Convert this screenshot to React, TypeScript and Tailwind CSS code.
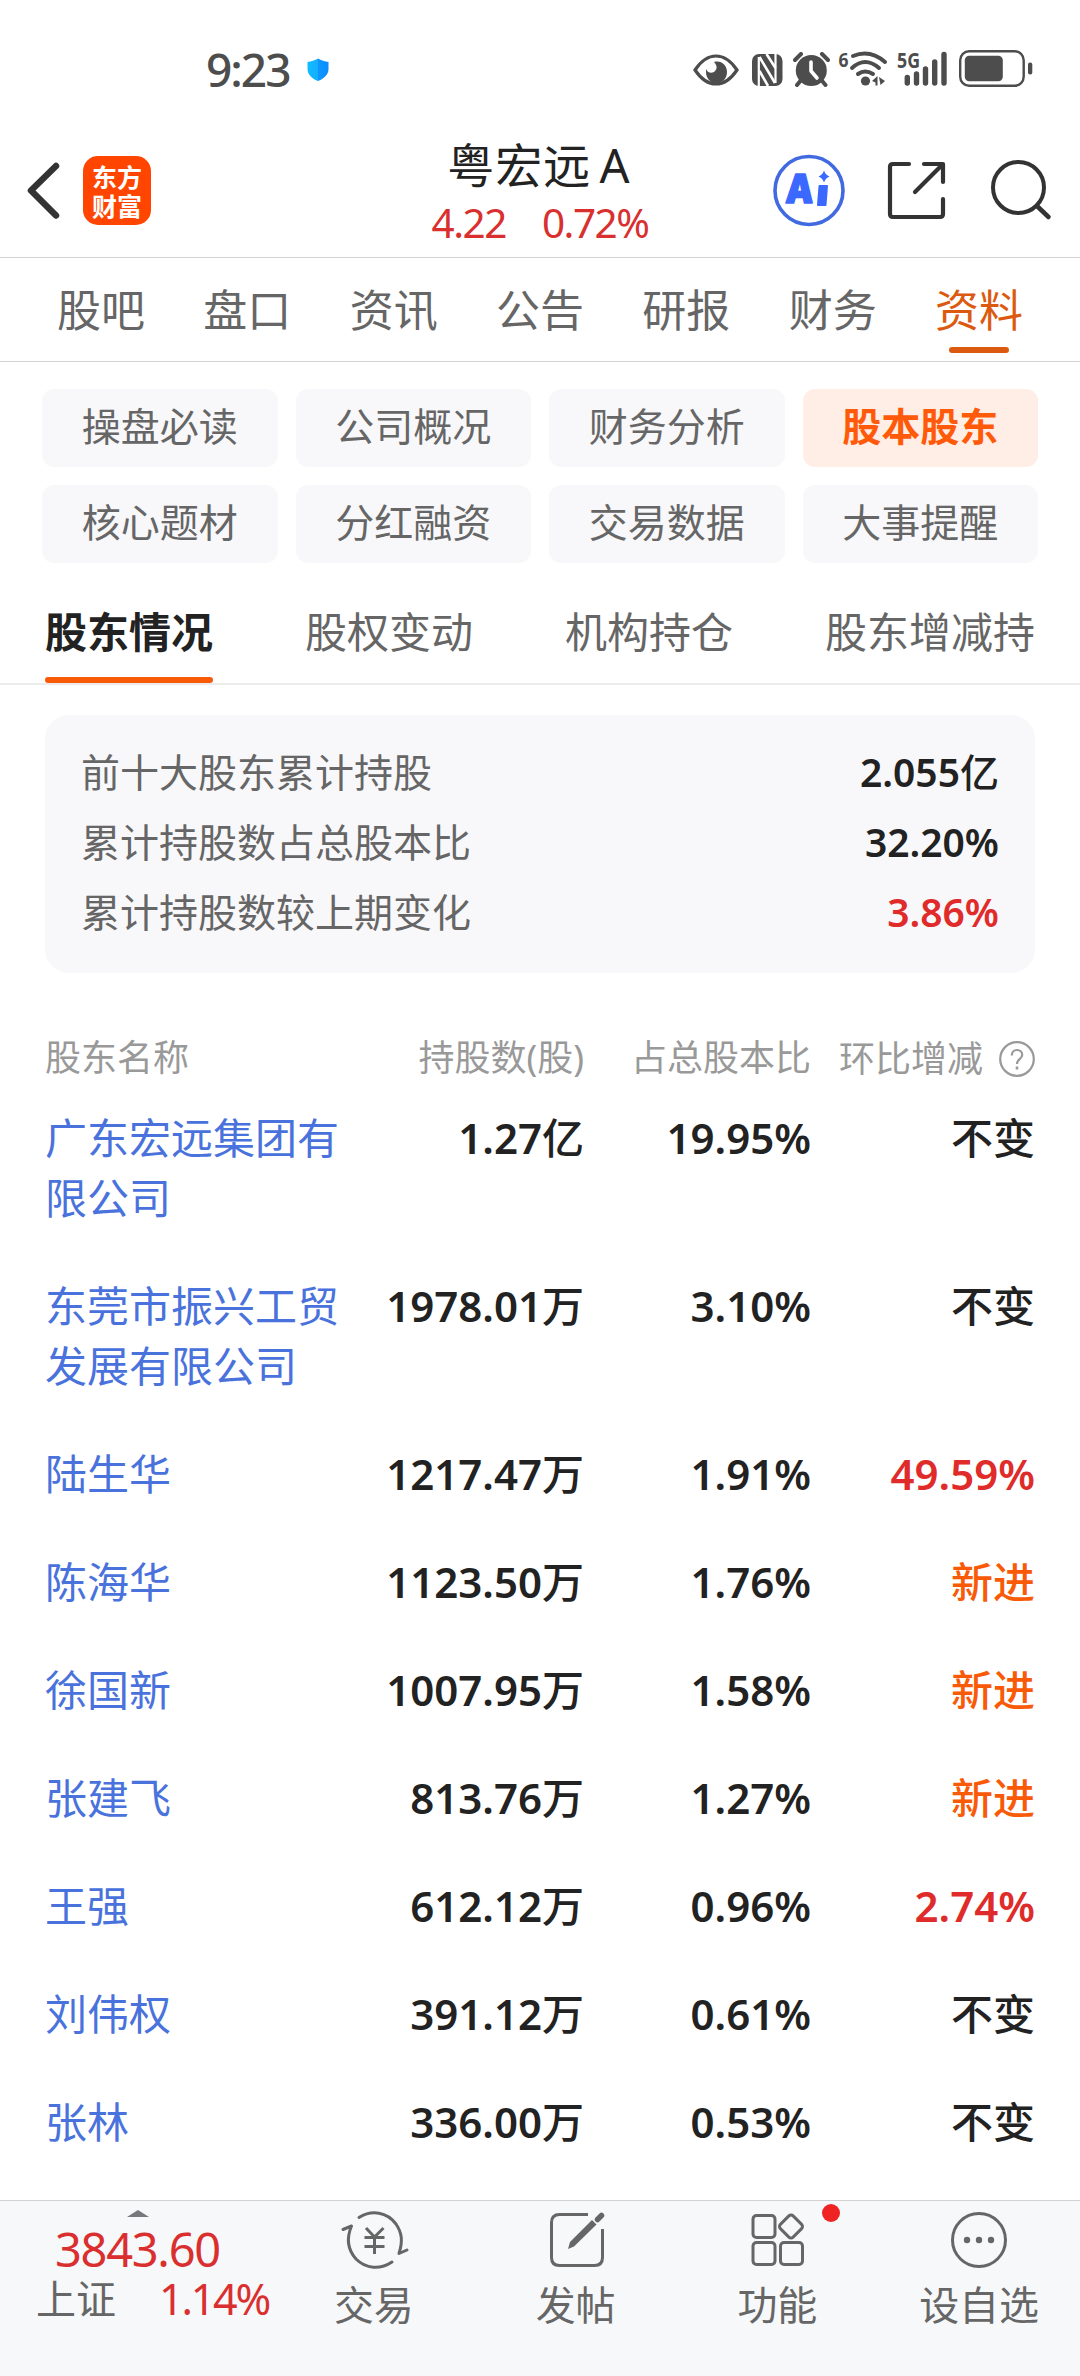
import type { ReactNode } from 'react';

const STATUS = '#4d4d4d';
const INK = '#333333';
const GREY = '#666666';

const mainTabs = ['股吧', '盘口', '资讯', '公告', '研报', '财务', '资料'];
const sections = ['操盘必读', '公司概况', '财务分析', '股本股东', '核心题材', '分红融资', '交易数据', '大事提醒'];
const subTabs = ['股东情况', '股权变动', '机构持仓', '股东增减持'];

const summary = [
  { label: '前十大股东累计持股', value: '2.055亿', tone: 'text-[#222]' },
  { label: '累计持股数占总股本比', value: '32.20%', tone: 'text-[#222]' },
  { label: '累计持股数较上期变化', value: '3.86%', tone: 'text-[#e02b2b]' },
];

const BLACK = 'text-[#222]';
const RED = 'text-[#e02b2b]';
const ORANGE = 'text-[#f95a08]';

const holders = [
  { name: '广东宏远集团有限公司', shares: '1.27亿', ratio: '19.95%', change: '不变', tone: BLACK },
  { name: '东莞市振兴工贸发展有限公司', shares: '1978.01万', ratio: '3.10%', change: '不变', tone: BLACK },
  { name: '陆生华', shares: '1217.47万', ratio: '1.91%', change: '49.59%', tone: RED },
  { name: '陈海华', shares: '1123.50万', ratio: '1.76%', change: '新进', tone: ORANGE },
  { name: '徐国新', shares: '1007.95万', ratio: '1.58%', change: '新进', tone: ORANGE },
  { name: '张建飞', shares: '813.76万', ratio: '1.27%', change: '新进', tone: ORANGE },
  { name: '王强', shares: '612.12万', ratio: '0.96%', change: '2.74%', tone: RED },
  { name: '刘伟权', shares: '391.12万', ratio: '0.61%', change: '不变', tone: BLACK },
  { name: '张林', shares: '336.00万', ratio: '0.53%', change: '不变', tone: BLACK },
];

/** Figures are semibold, the Chinese unit or word after them is medium. */
function Figure({ value }: { value: string }) {
  const digits = value.replace(/[^\d.%]/g, '');
  const unit = value.slice(digits.length);
  return (
    <>
      {digits && <span className="font-semibold">{digits}</span>}
      {unit && <span className="font-medium">{unit}</span>}
    </>
  );
}

function StatusBar() {
  return (
    <div className="flex h-[114px] items-start pt-[48px]">
      <div className="ml-[206px] mt-[-2px] w-[84px] text-[46px] leading-[46px] font-medium tracking-[-2px] text-[#4d4d4d]">9:23</div>
      <svg className="ml-[16px] mt-[9px]" width="24" height="25" viewBox="0 0 24 25">
        <defs>
          <linearGradient id="shield" x1="0" x2="1">
            <stop offset="0" stopColor="#12bcff" />
            <stop offset="0.5" stopColor="#12aeff" />
            <stop offset="0.52" stopColor="#0d97ff" />
            <stop offset="1" stopColor="#0d8cff" />
          </linearGradient>
        </defs>
        <path d="M12 1.5C15 3.5 19 4.5 22.5 5V12C22.5 18 17 22 12 24C7 22 1.500 18 1.500 12V5C5 4.500 9 3.500 12 1.500Z" fill="url(#shield)" />
      </svg>
      <svg className="ml-[363px] mt-[6px]" width="46" height="32" viewBox="693 54 46 32">
        <path d="M695 70C701 61 708 56 716 56S731 61 737 70C731 79 724 84 716 84S701 79 695 70Z" fill="none" stroke={STATUS} strokeWidth="3.2" />
        <path d="M714 62C721 60 727 65 727 72C727 79 722 83 716 83S706 78 706 72V69C708 73 711 73.500 714 72C718 69 717 65 714 62Z" fill={STATUS} />
      </svg>
      <svg className="ml-[12.500px] mt-[6px]" width="31" height="32" viewBox="0 0 31 32">
        <rect width="30.500" height="32" rx="7" fill={STATUS} />
        <path d="M6.800 3V32" stroke="white" strokeWidth="2.200" />
        <path d="M23.500 0V29" stroke="white" strokeWidth="2.200" />
        <path d="M7.500 3L23 29M7.500 17L16 32M14.500 0L23.500 14" stroke="white" strokeWidth="2.600" />
      </svg>
      <svg className="ml-[10.500px] mt-[4px]" width="37" height="35" viewBox="794 52 37 35">
        <path d="M796 60L802 54M829 60L823 54M798 85L803 79M826.500 85L821.500 79" stroke={STATUS} strokeWidth="4" strokeLinecap="round" />
        <circle cx="812.300" cy="70.500" r="15.500" fill={STATUS} />
        <path d="M812 62V71L818 78" stroke="white" strokeWidth="3.600" fill="none" strokeLinecap="round" strokeLinejoin="round" />
      </svg>
      <svg className="ml-[9px] mt-[2px] overflow-visible" width="49" height="37" viewBox="840 50 49 37">
        <text x="839.500" y="66.500" fontSize="20" fontWeight="700" fill={STATUS} textLength="10" lengthAdjust="spacingAndGlyphs">6</text>
        <g fill="none" stroke={STATUS} strokeWidth="4" strokeLinecap="round">
          <path d="M854 56Q871 49 886 62" />
          <path d="M853 68Q866 56 880 68" />
          <path d="M859 74Q866 69 874 74" />
        </g>
        <circle cx="866.500" cy="81" r="4.600" fill={STATUS} />
        <path d="M873 81L878.500 76V85.500H876.500V82.500ZM880 77L886 81L881.500 85Z" fill={STATUS} />
      </svg>
      <svg className="ml-[8px] mt-[2px] overflow-visible" width="52" height="37" viewBox="897 50 52 37">
        <text x="898" y="68" fontSize="22" fontWeight="700" fill={STATUS} textLength="23" lengthAdjust="spacingAndGlyphs">5G</text>
        <g stroke={STATUS} strokeWidth="5.400" strokeLinecap="round">
          <path d="M908.300 77.500V83M917.500 74V83M926.500 69V83M935.700 62V83M945 54.500V83" />
        </g>
      </svg>
      <svg className="ml-[11px] mt-[2px]" width="74" height="38" viewBox="960 50 74 38">
        <rect x="961.200" y="51.200" width="63.500" height="34.500" rx="9" fill="none" stroke={STATUS} strokeWidth="2.400" />
        <rect x="965.800" y="55.800" width="38" height="25.500" rx="4.500" fill={STATUS} />
        <rect x="1029" y="62.500" width="4.300" height="12" rx="2" fill={STATUS} />
      </svg>
    </div>
  );
}

function Header() {
  return (
    <header className="relative flex h-[144px] items-start border-b border-[#d4d4d4]">
      <svg className="ml-[26px] mt-[47px]" width="36" height="60" viewBox="0 0 36 60">
        <path d="M30 5L5 29.500L30 54.500" fill="none" stroke={INK} strokeWidth="6.500" strokeLinecap="round" strokeLinejoin="round" />
      </svg>
      <div className="ml-[21px] mt-[42px] flex h-[69px] w-[68px] flex-col items-center justify-center rounded-[15px] bg-[#ff4500] font-['Noto_Sans_CJK_SC'] text-[25px] leading-[29px] font-bold text-white">
        <span>东方</span>
        <span>财富</span>
      </div>
      <div className="ml-[248px] mt-[25px] w-[280px] text-center">
        <h1 className="text-[47px] leading-[52px] tracking-[1px] text-[#222] [word-spacing:-5px]">粤宏远 A</h1>
        <p className="flex justify-center gap-[36px] pl-[2px] text-[40.500px] leading-[63px] tracking-[-1.500px] text-[#d9302f]">
          <span>4.22</span>
          <span>0.72%</span>
        </p>
      </div>
      <svg className="ml-[93px] mt-[39px]" width="74" height="76" viewBox="772 153 74 76">
        <circle cx="809" cy="190.500" r="34" fill="none" stroke="#4169e1" strokeWidth="3.600" />
        <text transform="translate(785 203) skewX(-3)" fontFamily="Inter" fontSize="40" fontWeight="900" fill="#3b69ff" stroke="#3b69ff" strokeWidth="1.500" strokeLinejoin="round" textLength="28" lengthAdjust="spacingAndGlyphs">A</text>
        <path d="M819.500 186H827L825.500 205H818Z" fill="#3b69ff" stroke="#3b69ff" strokeWidth="2" strokeLinejoin="round" />
        <path d="M824 170.500Q825.500 175 829.500 176.500Q825.500 178 824 182.500Q822.500 178 818.500 176.500Q822.500 175 824 170.500Z" fill="#3b69ff" />
      </svg>
      <svg className="ml-[40px] mt-[46px]" width="62" height="62" viewBox="886 160 62 62">
        <path d="M909 164H893Q890 164 890 167V214Q890 217 893 217H940Q943 217 943 214V199M924 164H943V182M942 165L915 192" fill="none" stroke={INK} strokeWidth="4.200" strokeLinecap="round" strokeLinejoin="round" />
      </svg>
      <svg className="ml-[42px] mt-[44px]" width="62" height="64" viewBox="990 158 62 64">
        <circle cx="1018.500" cy="187.500" r="25.500" fill="none" stroke={INK} strokeWidth="4" />
        <path d="M1037 206L1048.500 217" stroke={INK} strokeWidth="4.500" strokeLinecap="round" />
      </svg>
    </header>
  );
}

function MainTabs() {
  return (
    <nav className="flex h-[104px] justify-between border-b border-[#d4d4d4] px-[56px]">
      {mainTabs.map((t) =>
        t === '资料' ? (
          <div key={t} className="flex w-[90px] flex-col items-center text-[#dc5a10]">
            <span className="pt-[16px] text-[44px] leading-[72px]">{t}</span>
            <span className="mt-[1px] h-[6px] w-[60px] rounded-full bg-[#dc5a10]" />
          </div>
        ) : (
          <div key={t} className="w-[90px] pt-[16px] text-center text-[44px] leading-[72px] text-[#666]">
            {t}
          </div>
        ),
      )}
    </nav>
  );
}

function SectionGrid() {
  return (
    <div className="grid grid-cols-4 gap-[18px] px-[42px] pt-[27px]">
      {sections.map((s) => (
        <div
          key={s}
          className={
            s === '股本股东'
              ? 'h-[78px] rounded-[12px] bg-[#ffeee6] text-center text-[39px] leading-[74px] font-bold text-[#ff5a0a]'
              : 'h-[78px] rounded-[12px] bg-[#f8f8fa] text-center text-[39px] leading-[74px] text-[#666]'
          }
        >
          {s}
        </div>
      ))}
    </div>
  );
}

function SubTabs() {
  return (
    <nav className="mt-[36px] flex h-[86px] justify-between border-b-2 border-[#ebebeb] px-[45px]">
      {subTabs.map((t) =>
        t === '股东情况' ? (
          <div key={t} className="flex flex-col text-[42px] leading-[66px] font-bold text-[#222]">
            <span>{t}</span>
            <span className="mt-[12px] h-[6px] rounded-full bg-[#f95a08]" />
          </div>
        ) : (
          <div key={t} className="text-[42px] leading-[66px] text-[#666]">
            {t}
          </div>
        ),
      )}
    </nav>
  );
}

function Summary() {
  return (
    <section className="mx-[45px] mt-[30px] h-[258px] rounded-[24px] bg-[#f8f8fa] px-[36px] pt-[22px] text-[39px] leading-[70px]">
      {summary.map((r) => (
        <div key={r.label} className="flex justify-between">
          <span className="text-[#666]">{r.label}</span>
          <span className={r.tone}>
            <Figure value={r.value} />
          </span>
        </div>
      ))}
    </section>
  );
}

function HoldersTable() {
  return (
    <section className="px-[45px] pt-[60px]">
      <div className="grid h-[51px] grid-cols-[302px_237px_227px_224px] text-[36px] leading-[50px] text-[#999]">
        <span>股东名称</span>
        <span className="text-right">持股数(股)</span>
        <span className="text-right">占总股本比</span>
        <span className="flex items-center justify-end gap-[16px]">
          环比增减
          <svg width="36" height="36" viewBox="0 0 36 36" fill="none" stroke="#999" strokeWidth="2.200">
            <circle cx="18" cy="18" r="16.800" />
            <path d="M12.800 14.500C12.800 11 15 9 18 9S23.200 11 23.200 14C23.200 18 18 18 18 23" />
            <path d="M18 25.500V28.500" strokeWidth="2.600" />
          </svg>
        </span>
      </div>
      {holders.map((h) => (
        <div key={h.name} className="grid grid-cols-[302px_237px_227px_224px] py-[24px] text-[42px] leading-[60px]">
          <span className="text-[#4a72dc]">{h.name}</span>
          <span className="text-right text-[#222]">
            <Figure value={h.shares} />
          </span>
          <span className="text-right text-[#222]">
            <Figure value={h.ratio} />
          </span>
          <span className={`text-right ${h.tone}`}>
            <Figure value={h.change} />
          </span>
        </div>
      ))}
    </section>
  );
}

function FooterItem({ label, icon }: { label: string; icon: ReactNode }) {
  return (
    <div className="flex flex-1 flex-col items-center">
      {icon}
      <span className="text-[40px] leading-[56px] text-[#666]">{label}</span>
    </div>
  );
}

function Footer() {
  const svg = { width: 120, height: 76, fill: 'none', stroke: GREY, strokeWidth: 3, className: 'overflow-visible' };
  return (
    <footer className="flex h-[176px] border-t border-[#d0d2d4] bg-[#f7f8fa]">
      <div className="flex w-[273px] flex-col">
        <svg className="ml-[127px] mt-[9px]" width="22" height="7" viewBox="0 0 22 7">
          <path d="M11 0L22 7H0Z" fill="#77777c" />
        </svg>
        <div className="mt-[7px] ml-[55px] text-[47px] leading-[50px] tracking-[-1.300px] text-[#d9302f]">3843.60</div>
        <div className="ml-[36px] flex items-center gap-[43px] leading-[50px]">
          <span className="text-[40px] text-[#666]">上证</span>
          <span className="text-[43px] tracking-[-2.200px] text-[#d9302f]">1.14%</span>
        </div>
      </div>
      <FooterItem
        label="交易"
        icon={
          <svg {...svg} viewBox="315 2201 120 76" strokeLinecap="round" strokeLinejoin="round">
            <path d="M360 2217.500C373 2209.500 388 2212 397 2224C403 2233 404 2241 400 2253.500L408 2250" />
            <path d="M344 2229.500L352.500 2226C347 2239 349 2250 357 2259C367 2269 381 2270 393 2262" />
            <path d="M367 2228L375.500 2237L384.500 2228M365.500 2237.500H385.500M365.500 2246.500H385.500M375.500 2237V2254" strokeLinecap="butt" />
          </svg>
        }
      />
      <FooterItem
        label="发帖"
        icon={
          <svg {...svg} viewBox="516 2201 120 76">
            <path d="M588 2214.500H559.500Q551.500 2214.500 551.500 2222.500V2257.500Q551.500 2265.500 559.500 2265.500H594.500Q602.500 2265.500 602.500 2257.500V2229" />
            <path d="M568 2249L570 2242L592 2220L596.500 2224.500L574 2246.500Z" fill={GREY} stroke="none" />
            <path d="M597.500 2219.500L601.500 2215.500" strokeWidth="5.500" strokeLinecap="round" />
          </svg>
        }
      />
      <FooterItem
        label="功能"
        icon={
          <svg {...svg} viewBox="717.500 2201 120 76">
            <rect x="753.500" y="2215.500" width="22" height="22" rx="3.500" />
            <rect x="753.500" y="2242.500" width="22" height="22" rx="3.500" />
            <rect x="781" y="2242.500" width="22" height="22" rx="3.500" />
            <rect x="782.500" y="2217.500" width="18" height="18" rx="3" transform="rotate(45 791.500 2226.500)" />
            <circle cx="831.500" cy="2213" r="9" fill="#f02323" stroke="none" />
          </svg>
        }
      />
      <FooterItem
        label="设自选"
        icon={
          <svg {...svg} viewBox="919 2201 120 76">
            <circle cx="979" cy="2240" r="26.500" />
            <g fill={GREY} stroke="none">
              <circle cx="967" cy="2240" r="3.200" />
              <circle cx="979" cy="2240" r="3.200" />
              <circle cx="991" cy="2240" r="3.200" />
            </g>
          </svg>
        }
      />
    </footer>
  );
}

export default function App() {
  return (
    <div className="flex h-[2376px] w-[1080px] flex-col overflow-hidden bg-white font-['Noto_Sans','Noto_Sans_CJK_SC',sans-serif]">
      <StatusBar />
      <Header />
      <MainTabs />
      <SectionGrid />
      <SubTabs />
      <Summary />
      <HoldersTable />
      <div className="flex-1" />
      <Footer />
    </div>
  );
}
